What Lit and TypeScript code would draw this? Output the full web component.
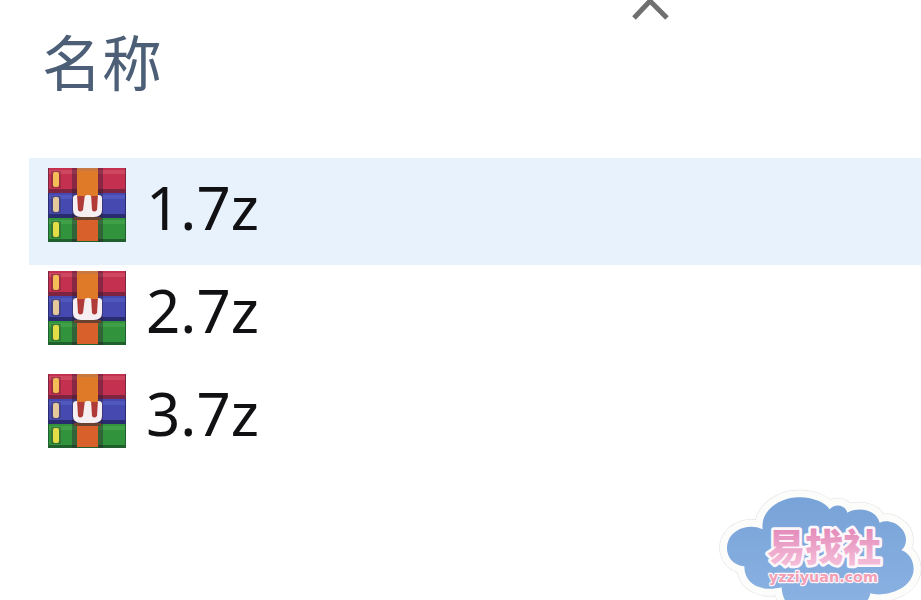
import { LitElement, html, css, svg } from "lit";
import { customElement, state } from "lit/decorators.js";

const CLOUD =
  "M158 148 C150 85 220 50 270 52 C312 53 345 68 359 88 C372 70 405 72 412 98 C440 82 496 84 509 128 C545 112 588 145 588 178 C588 195 582 204 574 211 C605 220 620 262 605 292 C588 332 520 352 481 340 C476 370 450 382 420 390 L250 390 C225 370 215 345 215 322 C160 336 103 318 103 259 C60 255 42 215 55 182 C70 146 118 130 158 148 Z";

@customElement("archive-icon")
class ArchiveIcon extends LitElement {
  static styles = css`
    :host {
      display: block;
      flex: none;
    }
    svg {
      display: block;
      width: 78px;
      height: 74px;
    }
  `;

  render() {
    const book = (y: number, top: string, mid: string, low: string, label: string) => svg`
      <rect x="0" y=${y} width="78" height="25" fill=${low} />
      <rect x="1" y=${y} width="76" height="21" fill=${mid} />
      <rect x="1" y=${y + 2} width="76" height="4" fill=${top} />
      <rect x="3" y=${y + 3} width="10" height="17" fill="#3b2b26" opacity="0.3" />
      <rect x="5" y=${y + 4} width="6" height="15" rx="2" fill=${label} />
      <rect x="24" y=${y} width="5" height="25" fill="#301c30" opacity="0.4" />
      <rect x="50" y=${y} width="5" height="25" fill="#301c30" opacity="0.4" />`;
    return html`
      <svg viewBox="0 0 78 74" aria-hidden="true">
        ${book(0, "#cf4660", "#c43050", "#7c2440", "#f5bd58")}
        ${book(25, "#5058be", "#4549b0", "#292d70", "#e6c99a")}
        ${book(50, "#3fa047", "#31933c", "#20602c", "#e5dd48")}
        <rect x="29" y="0" width="21" height="33" fill="#df7b28" />
        <rect x="29" y="0" width="21" height="3" fill="#c9793f" />
        <rect x="29" y="50" width="21" height="23" fill="#d8602a" />
        <path d="M25 30 Q25 27 29 27 H50 Q54 27 54 30 V42 Q54 49 46 49 H33 Q25 49 25 42 Z" fill="#f6eff2" />
        <path d="M29 26 H37 L35 42 Q32 45 30 42 Z M43 26 H50 L49 42 Q46 45 44 42 Z" fill="#b03a38" />
        <path d="M29 24 H50 V28 H43 Q40 25 37 28 H29 Z" fill="#df7b28" />
        <rect x="26" y="49" width="27" height="3" fill="#6a4230" />
      </svg>
    `;
  }
}

@customElement("cloud-badge")
class CloudBadge extends LitElement {
  static styles = css`
    :host {
      display: block;
    }
    svg {
      display: block;
      width: 211px;
      height: 120px;
    }
    .halo {
      fill: none;
      stroke: #e0e0e6;
      stroke-width: 46px;
      stroke-linejoin: round;
    }
    .rim {
      fill: none;
      stroke: #fcfcfb;
      stroke-width: 43px;
      stroke-linejoin: round;
    }
    text {
      text-anchor: middle;
      stroke: #fdf6fa;
      stroke-linejoin: round;
      paint-order: stroke;
      font-weight: 700;
    }
    .title {
      font-family: "Noto Sans CJK SC", sans-serif;
      font-size: 114px;
      font-weight: 900;
      fill: url(#pink);
      stroke-width: 16px;
    }
    .domain {
      font-family: "DejaVu Sans", sans-serif;
      font-size: 43px;
      fill: #f29fb6;
      stroke-width: 7px;
    }
  `;

  render() {
    return html`
      <svg viewBox="0 0 633 360" role="img" aria-label="易找社 yzziyuan.com">
        <defs>
          <linearGradient id="sky" x1="0" y1="0" x2="0" y2="1">
            <stop offset="0" stop-color="#78a3d8" />
            <stop offset="1" stop-color="#8bb2e2" />
          </linearGradient>
          <linearGradient id="pink" x1="0" y1="0" x2="0" y2="1">
            <stop offset="0.2" stop-color="#e38ab9" />
            <stop offset="0.9" stop-color="#f5bfda" />
          </linearGradient>
        </defs>
        <path class="halo" d=${CLOUD} />
        <path class="rim" d=${CLOUD} />
        <path d=${CLOUD} fill="url(#sky)" />
        <text class="title" x="343" y="243">易找社</text>
        <text class="domain" x="340" y="307">yzziyuan.com</text>
      </svg>
    `;
  }
}

@customElement("app-root")
class AppRoot extends LitElement {
  static styles = css`
    :host {
      display: block;
      position: relative;
      min-height: 100vh;
      overflow: hidden;
      background: #ffffff;
      color: #111114;
      font-family: "Noto Sans", "Noto Sans CJK SC", sans-serif;
    }
    table {
      width: 100%;
      border-spacing: 0;
      padding-left: 31px;
    }
    th,
    td {
      padding: 0;
      text-align: left;
      font-weight: 400;
      vertical-align: top;
    }
    th {
      height: 160px;
    }
    .sort {
      display: block;
      width: 100%;
      margin: 0;
      border: 0;
      padding: 24px 11px;
      background: none;
      color: #4c5f76;
      font: 400 60px/72px "Noto Sans CJK SC", sans-serif;
      text-align: left;
    }
    .chevron {
      position: absolute;
      top: 0;
      left: 68%;
      width: 48px;
      height: 24px;
      fill: none;
      stroke: #707070;
      stroke-width: 5px;
    }
    .descending {
      transform: scaleY(-1);
    }
    td {
      height: 95px;
      padding: 8px 0 0 17px;
    }
    .selected {
      background: #e7f2fc;
      box-shadow: 0 0 0 2px #e7f2fc;
    }
    .file {
      display: flex;
      align-items: center;
      gap: 20px;
      height: 74px;
      font-size: 60px;
      line-height: 74px;
    }
    .name {
      padding-top: 4px;
    }
    cloud-badge {
      position: absolute;
      right: 0;
      bottom: 0;
    }
  `;

  @state() private ascending = true;
  @state() private selected = "1.7z";

  render() {
    const files = ["1.7z", "2.7z", "3.7z"];
    if (!this.ascending) files.reverse();
    return html`
      <table>
        <thead>
          <tr>
            <th scope="col" aria-sort=${this.ascending ? "ascending" : "descending"}>
              <button class="sort" @click=${() => (this.ascending = !this.ascending)}>
                名称
                <svg class="chevron ${this.ascending ? "" : "descending"}" viewBox="0 0 48 24" aria-hidden="true">
                  <path d="M8 18 L24 1 L41 18" />
                </svg>
              </button>
            </th>
          </tr>
        </thead>
        <tbody>
          ${files.map(
            (name) => html`
              <tr class=${name === this.selected ? "selected" : ""} @click=${() => (this.selected = name)}>
                <td>
                  <div class="file">
                    <archive-icon></archive-icon>
                    <span class="name">${name}</span>
                  </div>
                </td>
              </tr>
            `
          )}
        </tbody>
      </table>
      <cloud-badge></cloud-badge>
    `;
  }
}
